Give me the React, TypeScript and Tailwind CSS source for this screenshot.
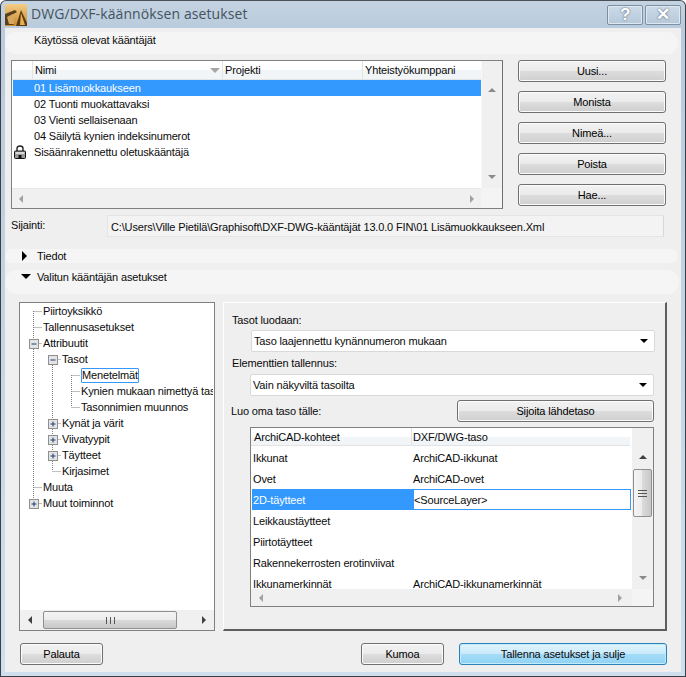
const translators = [
  "01 Lisämuokkaukseen",
  "02 Tuonti muokattavaksi",
  "03 Vienti sellaisenaan",
  "04 Säilytä kynien indeksinumerot",
];

const sideButtons = ["Uusi...", "Monista", "Nimeä...", "Poista", "Hae..."];

// guides = tree columns whose dotted line runs the whole row height
const treeRows = [
  { label: "Piirtoyksikkö", level: 0, guides: [], top: false, bottom: true },
  { label: "Tallennusasetukset", level: 0, guides: [], top: true, bottom: true },
  { label: "Attribuutit", level: 0, guides: [], top: true, bottom: true, box: "minus" },
  { label: "Tasot", level: 1, guides: [0], top: false, bottom: true, box: "minus" },
  { label: "Menetelmät", level: 2, guides: [0, 1], top: false, bottom: true, focused: true },
  { label: "Kynien mukaan nimettyä tasoa", level: 2, guides: [0, 1], top: true, bottom: true },
  { label: "Tasonnimien muunnos", level: 2, guides: [0, 1], top: true, bottom: false },
  { label: "Kynät ja värit", level: 1, guides: [0], top: true, bottom: true, box: "plus" },
  { label: "Viivatyypit", level: 1, guides: [0], top: true, bottom: true, box: "plus" },
  { label: "Täytteet", level: 1, guides: [0], top: true, bottom: true, box: "plus" },
  { label: "Kirjasimet", level: 1, guides: [0], top: true, bottom: false },
  { label: "Muuta", level: 0, guides: [], top: true, bottom: true },
  { label: "Muut toiminnot", level: 0, guides: [], top: true, bottom: false, box: "plus" },
];

const layerRows = [
  { name: "Ikkunat", layer: "ArchiCAD-ikkunat" },
  { name: "Ovet", layer: "ArchiCAD-ovet" },
  { name: "2D-täytteet", layer: "<SourceLayer>", selected: true },
  { name: "Leikkaustäytteet", layer: "" },
  { name: "Piirtotäytteet", layer: "" },
  { name: "Rakennekerrosten erotinviivat", layer: "" },
  { name: "Ikkunamerkinnät", layer: "ArchiCAD-ikkunamerkinnät" },
];

function AppLogo() {
  return (
    <svg width="22" height="22" viewBox="0 0 22 22" className="shrink-0">
      <defs>
        <linearGradient id="logoBg" x1="0" y1="0" x2="0" y2="1">
          <stop offset="0" stopColor="#f3cd86" />
          <stop offset="1" stopColor="#c98a2c" />
        </linearGradient>
      </defs>
      <rect width="22" height="22" fill="url(#logoBg)" />
      <path d="M0 10 L10 6 L12 8 L3 13 L9 21 L0 21 Z" fill="#5a401c" />
      <path d="M2 13 L8 10 L9 20 L4 20 Z" fill="#d9a860" />
      <path d="M11 22 L16 6 L22 19 L22 22 Z" fill="#5a3a14" />
      <path d="M15 21 L16 9 L20 21 Z" fill="#e8b04e" />
    </svg>
  );
}

function CaptionButton({ children }: { children: React.ReactNode }) {
  return (
    <div className="w-[36px] h-[20px] flex items-center justify-center rounded-[2px] border border-[#7d8fa3] bg-gradient-to-b from-[#cddbe8] to-[#b6c8d9] shadow-[inset_0_0_0_1px_#dfe8f0]">
      {children}
    </div>
  );
}

function UpArrow({ dark }: { dark?: boolean }) {
  return <div className={`w-0 h-0 border-x-[4px] border-x-transparent border-b-[4px] ${dark ? "border-b-[#404040]" : "border-b-[#8a8a8a]"}`} />;
}

function DownArrow() {
  return <div className="w-0 h-0 border-x-[4px] border-x-transparent border-t-[4px] border-t-[#8a8a8a]" />;
}

function LeftArrow({ dark }: { dark?: boolean }) {
  return <div className={`w-0 h-0 border-y-[4px] border-y-transparent border-r-[4px] ${dark ? "border-r-[#404040]" : "border-r-[#a0a0a0]"}`} />;
}

function RightArrow({ dark }: { dark?: boolean }) {
  return <div className={`w-0 h-0 border-y-[4px] border-y-transparent border-l-[4px] ${dark ? "border-l-[#404040]" : "border-l-[#a0a0a0]"}`} />;
}

function Button({ label, className }: { label: string; className: string }) {
  return (
    <div
      className={`h-[22px] flex items-center justify-center rounded-[3px] border border-[#707070] bg-[linear-gradient(#f2f2f2_0%,#ebebeb_48%,#dddddd_50%,#cfcfcf_100%)] shadow-[inset_0_0_0_1px_#fbfbfb] text-black ${className}`}
    >
      {label}
    </div>
  );
}

function LockIcon() {
  return (
    <svg width="12" height="14" viewBox="0 0 12 14" className="shrink-0">
      <path d="M3 6 V3.5 C3 1.8 4.2 1 6 1 C7.8 1 9 1.8 9 3.5 V6" fill="none" stroke="#222" strokeWidth="1.4" />
      <rect x="0.5" y="6" width="11" height="7.5" rx="1" fill="#9a9a9a" stroke="#111" />
      <rect x="1.5" y="7" width="9" height="2" fill="#d8d8d8" />
      <rect x="4.5" y="10" width="3" height="3" fill="#111" />
    </svg>
  );
}

function TreeGutter({ row }: { row: (typeof treeRows)[number] }) {
  const x = 13.5 + row.level * 19;
  const endX = 22 + row.level * 19;
  const dots = { stroke: "#808080", strokeDasharray: "1 1" };
  return (
    <svg width={endX + 1} height="16" className="shrink-0">
      {row.guides.map((g) => (
        <line key={g} x1={13.5 + g * 19} x2={13.5 + g * 19} y1="0" y2="16" {...dots} />
      ))}
      {row.top && <line x1={x} x2={x} y1="0" y2="8" {...dots} />}
      {row.bottom && <line x1={x} x2={x} y1="8" y2="16" {...dots} />}
      <line x1={x} x2={endX} y1="8.5" y2="8.5" {...dots} />
      {row.box && (
        <g>
          <rect x={x - 4} y="4.5" width="9" height="9" fill="#e4e4e4" stroke="#8f8f8f" />
          <line x1={x - 2} x2={x + 3} y1="9" y2="9" stroke="#1c3a78" />
          {row.box === "plus" && <line x1={x + 0.5} x2={x + 0.5} y1="6.5" y2="11.5" stroke="#1c3a78" />}
        </g>
      )}
    </svg>
  );
}

function Combo({ label, className }: { label: string; className: string }) {
  return (
    <div className={`h-[22px] flex items-center justify-between bg-white border border-[#d9d9d9] rounded-[2px] pl-[2px] pr-[6px] ${className}`}>
      <span>{label}</span>
      <div className="w-0 h-0 border-x-[4px] border-x-transparent border-t-[4px] border-t-black" />
    </div>
  );
}

export default function App() {
  return (
    <div
      className="w-[686px] h-[677px] flex flex-col overflow-hidden rounded-t-[6px] border border-[#3c4046] border-t-[#4a4f55] bg-[linear-gradient(#c4d3e1_0%,#b9cbdc_4%,#cfdfee_100%)] px-[4px] pb-[4px] text-[11px] leading-[14px] tracking-[-0.15px] text-[#0a0a0a]"
      style={{ fontFamily: '"Liberation Sans", Tahoma, sans-serif' }}
    >
      {/* title bar */}
      <div className="h-[27px] shrink-0 flex items-start">
        <div className="mt-[3px]">
          <AppLogo />
        </div>
        <span className="ml-[4px] mt-[3px] text-[14px] leading-[20px] tracking-[0.1px] text-[#44535f]" style={{ fontFamily: '"Open Sans", sans-serif' }}>
          DWG/DXF-käännöksen asetukset
        </span>
        <div className="ml-auto mt-[4px] flex gap-[2px]">
          <CaptionButton>
            <span className="text-[17px] font-bold text-white [text-shadow:0_0_2px_#3a4a5a]">?</span>
          </CaptionButton>
          <CaptionButton>
            <span className="text-[17px] font-bold text-white [text-shadow:0_0_2px_#3a4a5a]">✕</span>
          </CaptionButton>
        </div>
      </div>

      {/* client area */}
      <div className="flex-1 min-h-0 flex flex-col bg-[#efefef] pt-[4px]">
        <div className="h-[22px] mr-[3px] rounded-[11px] bg-[#f5f5f5] pl-[29px] pt-[1px]">Käytössä olevat kääntäjät</div>

        {/* translators list and its buttons */}
        <div className="mt-[6px] ml-[6px] flex">
          <div className="w-[492px] h-[149px] flex flex-col border border-[#808080] border-r-[#707070] bg-white">
            <div className="flex-1 min-h-0 flex">
              <div className="flex-1 flex flex-col min-w-0">
                <div className="h-[19px] flex bg-[linear-gradient(#ffffff_50%,#f2f5f8_50%)] border-b border-[#e3e3e3]">
                  <div className="w-[21px] border-r border-[#e3e3e3]" />
                  <div className="w-[190px] flex items-center justify-between px-[2px] border-r border-[#e3e3e3]">
                    <span>Nimi</span>
                    <div className="w-0 h-0 border-x-[5px] border-x-transparent border-t-[5px] border-t-[#a6a6a6]" />
                  </div>
                  <div className="w-[140px] flex items-center pl-[2px] border-r border-[#e3e3e3]">Projekti</div>
                  <div className="flex-1 flex items-center pl-[2px]">Yhteistyökumppani</div>
                </div>
                {translators.map((name, i) => (
                  <div key={name} className={`h-[16px] ml-[1px] flex items-center pl-[21px] ${i === 0 ? "bg-[#3399ff] text-white" : ""}`}>
                    {name}
                  </div>
                ))}
                <div className="h-[16px] flex items-center pl-[2px]">
                  <div className="w-[20px]">
                    <LockIcon />
                  </div>
                  Sisäänrakennettu oletuskääntäjä
                </div>
              </div>
              <div className="w-[21px] shrink-0 bg-[#f0f0f0] flex flex-col items-center justify-between pt-[27px] pb-[9px] border-l border-[#f8f8f8]">
                <UpArrow />
                <DownArrow />
              </div>
            </div>
            <div className="h-[20px] shrink-0 flex">
              <div className="flex-1 bg-[#f0f0f0] flex items-center justify-between px-[7px] border-t border-[#e8e8e8]">
                <LeftArrow />
                <RightArrow />
              </div>
              <div className="w-[21px] bg-[#f4f4f4]" />
            </div>
          </div>
          <div className="ml-[15px] flex flex-col gap-[9px]">
            {sideButtons.map((label) => (
              <Button key={label} label={label} className="w-[148px]" />
            ))}
          </div>
        </div>

        {/* location */}
        <div className="mt-[6px] ml-[6px] flex items-start">
          <span className="w-[96px] mt-[3px]">Sijainti:</span>
          <div className="w-[557px] h-[22px] flex items-center pl-[3px] pt-[1px] bg-[#f3f3f3] border border-[#e4e4e4] border-r-[#d8d8d8]">
            C:\Users\Ville Pietilä\Graphisoft\DXF-DWG-kääntäjät 13.0.0 FIN\01 Lisämuokkaukseen.Xml
          </div>
        </div>

        {/* collapsible sections */}
        <div className="mt-[12px] mr-[3px] h-[14px] rounded-[7px] bg-[#f5f5f5] flex items-center pl-[17px]">
          <div className="w-0 h-0 border-y-[5px] border-y-transparent border-l-[5px] border-l-black" />
          <span className="ml-[10px]">Tiedot</span>
        </div>
        <div className="mt-[7px] mr-[2px] h-[24px] rounded-[12px] bg-[#f5f5f5] flex items-start pl-[16px]">
          <div className="mt-[4px] w-0 h-0 border-x-[5px] border-x-transparent border-t-[5px] border-t-black" />
          <span className="ml-[6px]">Valitun kääntäjän asetukset</span>
        </div>

        {/* settings */}
        <div className="mt-[8px] ml-[14px] flex">
          {/* tree */}
          <div className="w-[196px] h-[329px] flex flex-col border border-[#808080] bg-white">
            <div className="flex-1 min-h-0 overflow-hidden">
              {treeRows.map((row) => (
                <div key={row.label} className="h-[16px] flex items-center whitespace-nowrap">
                  <TreeGutter row={row} />
                  {row.focused ? (
                    <span className="h-[15px] flex items-center border border-[#3399ff] rounded-[1px]">{row.label}</span>
                  ) : (
                    <span className="overflow-hidden flex-1 mr-[1px]">{row.label}</span>
                  )}
                </div>
              ))}
            </div>
            <div className="h-[20px] shrink-0 bg-[#f0f0f0] flex items-center pl-[8px] pr-[8px]">
              <LeftArrow dark />
              <div className="ml-[11px] w-[134px] h-[18px] flex items-center justify-center rounded-[2px] border border-[#8f8f8f] bg-[linear-gradient(#f4f4f4_0%,#ececec_48%,#dadada_50%,#c8c8c8_100%)]">
                <span className="w-[9px] h-[7px] border-x border-[#555] flex justify-center">
                  <span className="w-px h-full bg-[#555]" />
                </span>
              </div>
              <div className="ml-auto">
                <RightArrow dark />
              </div>
            </div>
          </div>

          {/* layer settings panel */}
          <div className="ml-[8px] w-[444px] h-[329px] flex flex-col border border-white border-r-[#5e5e5e] border-b-[#5e5e5e] border-r-2 border-b-2 pl-[7px] pt-[10px]">
            <div className="ml-[1px] h-[14px]">Tasot luodaan:</div>
            <Combo label="Taso laajennettu kynännumeron mukaan" className="ml-[20px] mt-[3px] w-[404px]" />
            <div className="ml-[1px] mt-[4px] h-[14px]">Elementtien tallennus:</div>
            <Combo label="Vain näkyviltä tasoilta" className="ml-[19px] mt-[4px] w-[404px]" />
            <div className="mt-[4px] flex items-start">
              <span className="mt-[4px] w-[226px] shrink-0">Luo oma taso tälle:</span>
              <Button label="Sijoita lähdetaso" className="w-[197px]" />
            </div>

            {/* layer table */}
            <div className="mt-[5px] ml-[19px] w-[404px] h-[180px] flex flex-col border border-[#808080] bg-white">
              <div className="flex-1 min-h-0 flex">
                <div className="flex-1 min-w-0 flex flex-col">
                  <div className="h-[18px] shrink-0 flex bg-[linear-gradient(#ffffff_50%,#f2f5f8_50%)] border-b border-[#e3e3e3] mr-[2px]">
                    <div className="w-[161px] flex items-center pl-[3px] pt-[1px] border-r border-[#e3e3e3]">ArchiCAD-kohteet</div>
                    <div className="flex-1 flex items-center pl-[1px] pt-[1px]">DXF/DWG-taso</div>
                  </div>
                  <div className="flex-1 min-h-0 overflow-hidden pt-[1px]">
                    {layerRows.map((row) => (
                      <div key={row.name} className="h-[21px] ml-[1px] mr-[1px] flex items-center shrink-0">
                        <div className={`w-[161px] h-full flex items-center pl-[1px] pt-[1px] whitespace-nowrap ${row.selected ? "bg-[#3399ff] text-white" : ""}`}>
                          {row.name}
                        </div>
                        <div className={`flex-1 h-full flex items-center pt-[1px] ${row.selected ? "border border-[#3399ff]" : ""}`}>{row.layer}</div>
                      </div>
                    ))}
                  </div>
                </div>
                <div className="w-[21px] shrink-0 bg-[#f0f0f0] flex flex-col items-center pt-[27px] pb-[9px]">
                  <UpArrow dark />
                  <div className="mt-[10px] w-[19px] h-[48px] flex flex-col items-center justify-center gap-[2px] rounded-[2px] border border-[#8f8f8f] bg-[linear-gradient(90deg,#f4f4f4_0%,#ececec_48%,#dadada_50%,#c8c8c8_100%)]">
                    <span className="w-[9px] h-px bg-[#555]" />
                    <span className="w-[9px] h-px bg-[#555]" />
                    <span className="w-[9px] h-px bg-[#555]" />
                  </div>
                  <div className="mt-auto">
                    <DownArrow />
                  </div>
                </div>
              </div>
              <div className="h-[17px] shrink-0 flex">
                <div className="flex-1 bg-[#f0f0f0] flex items-center justify-between pl-[8px] pr-[10px]">
                  <LeftArrow />
                  <RightArrow />
                </div>
                <div className="w-[21px] bg-[#f4f4f4]" />
              </div>
            </div>
          </div>
        </div>

        {/* dialog buttons */}
        <div className="mt-[12px] ml-[15px] flex">
          <Button label="Palauta" className="w-[83px]" />
          <Button label="Kumoa" className="ml-[258px] w-[83px]" />
          <div className="ml-[15px] w-[208px] h-[22px] flex items-center justify-center rounded-[3px] border border-[#2c7fb8] bg-[linear-gradient(#e4f5fd_0%,#c8eafb_48%,#a6dcf7_50%,#8fd2f5_100%)] shadow-[inset_0_0_0_1px_#c0ecff]">
            Tallenna asetukset ja sulje
          </div>
        </div>
      </div>
    </div>
  );
}
